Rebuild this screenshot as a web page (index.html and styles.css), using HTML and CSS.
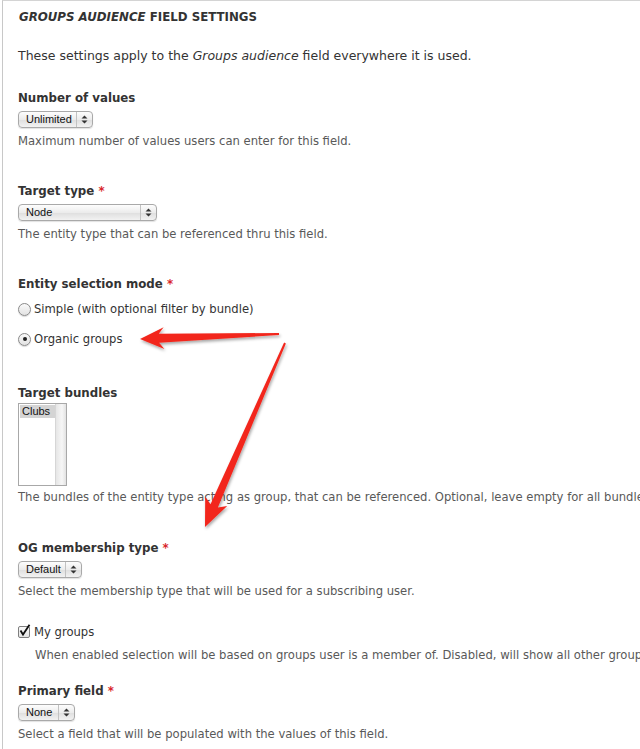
FILE: index.html
```html
<!DOCTYPE html>
<html lang="en">
<head>
  <meta charset="UTF-8" />
  <title>Groups audience field settings</title>
  <link rel="stylesheet" href="styles.css">
</head>
<body>

  <div class="panel">
    <h2 class="panel-title"><em>Groups audience</em> field settings</h2>
    <p class="intro">These settings apply to the <em>Groups audience</em> field everywhere it is used.</p>

    <div class="form-item item-first">
      <label>Number of values</label>
      <span class="select select-unlimited">
        <span class="select-text">Unlimited</span>
        <span class="select-arrows"><svg width="7" height="9" viewBox="0 0 7 9"><path d="M0.5 3.6L3.5 0.6L6.5 3.6Z M0.5 5.4L3.5 8.4L6.5 5.4Z"/></svg></span>
      </span>
      <div class="description">Maximum number of values users can enter for this field.</div>
    </div>

    <div class="form-item">
      <label>Target type <span class="required">*</span></label>
      <span class="select select-node">
        <span class="select-text">Node</span>
        <span class="select-arrows"><svg width="7" height="9" viewBox="0 0 7 9"><path d="M0.5 3.6L3.5 0.6L6.5 3.6Z M0.5 5.4L3.5 8.4L6.5 5.4Z"/></svg></span>
      </span>
      <div class="description">The entity type that can be referenced thru this field.</div>
    </div>

    <div class="form-item">
      <label>Entity selection mode <span class="required">*</span></label>
      <div class="radio radio-first"><span class="radio-dot"></span>Simple (with optional filter by bundle)</div>
      <div class="radio radio-second"><span class="radio-dot checked"></span>Organic groups</div>
    </div>

    <div class="form-item item-bundles">
      <label>Target bundles</label>
      <div class="listbox">
        <div class="listbox-options"><span class="option-selected">Clubs</span></div>
        <div class="listbox-scroll"></div>
      </div>
      <div class="description description-tight">The bundles of the entity type acting as group, that can be referenced. Optional, leave empty for all bundles.</div>
    </div>

    <div class="form-item item-og">
      <label>OG membership type <span class="required">*</span></label>
      <span class="select select-default">
        <span class="select-text">Default</span>
        <span class="select-arrows"><svg width="7" height="9" viewBox="0 0 7 9"><path d="M0.5 3.6L3.5 0.6L6.5 3.6Z M0.5 5.4L3.5 8.4L6.5 5.4Z"/></svg></span>
      </span>
      <div class="description">Select the membership type that will be used for a subscribing user.</div>
    </div>

    <div class="form-item item-check">
      <div class="checkbox">
        <span class="check-box"><svg width="14" height="14" viewBox="0 0 14 14"><path d="M2.5 6.5L5 10.5L11.5 0.8" fill="none" stroke="#111" stroke-width="1.8"/></svg></span>My groups
      </div>
      <div class="description description-indent">When enabled selection will be based on groups user is a member of. Disabled, will show all other groups.</div>
    </div>

    <div class="form-item item-primary">
      <label>Primary field <span class="required">*</span></label>
      <span class="select select-none">
        <span class="select-text">None</span>
        <span class="select-arrows"><svg width="7" height="9" viewBox="0 0 7 9"><path d="M0.5 3.6L3.5 0.6L6.5 3.6Z M0.5 5.4L3.5 8.4L6.5 5.4Z"/></svg></span>
      </span>
      <div class="description">Select a field that will be populated with the values of this field.</div>
    </div>
  </div>

  <!-- annotation arrows drawn over the form -->
  <svg class="arrows" width="640" height="749" viewBox="0 0 640 749">
    <defs>
      <filter id="shadow" x="-20%" y="-20%" width="140%" height="140%">
        <feDropShadow dx="1" dy="2" stdDeviation="1.5" flood-color="#000" flood-opacity="0.35"/>
      </filter>
    </defs>
    <g fill="#f2281d" filter="url(#shadow)">
      <polygon points="278.96,333 158.8,333.8 163.6,327.2 140,339 164.4,349.1 159.1,342.8 279.04,335"/>
      <polygon points="285.9,343.4 217.9,507.5 227.2,506.1 205,527 205.2,496.5 210.5,504.3 284.1,342.6"/>
    </g>
  </svg>

</body>
</html>
```

FILE: styles.css
```css
* {
  box-sizing: border-box;
}

body {
  margin: 0;
  padding: 0;
  background: #fff;
  font-family: "DejaVu Sans", Verdana, sans-serif;
  font-size: 12.5px;
  line-height: 18px;
  color: #333;
  overflow: hidden;
  position: relative;
  width: 640px;
  height: 749px;
}

.panel {
  margin-left: 2px;
  width: 720px;
  height: 760px;
  border-top: 1px solid #d4d4d4;
  border-left: 1px solid #c8c8c8;
  padding: 0 0 0 15px;
  white-space: nowrap;
}

.panel-title {
  margin: 7px 0 0 1px;
  font-size: 11.8px;
  line-height: 18px;
  font-weight: bold;
  text-transform: uppercase;
  color: #333;
}

.intro {
  margin: 21px 0 0;
}

.form-item {
  margin-top: 32px;
}

.form-item.item-first {
  margin-top: 24px;
}

.form-item.item-bundles {
  margin-top: 36px;
}

.form-item.item-og {
  margin-top: 33px;
}

.form-item.item-check {
  margin-top: 23px;
}

.form-item.item-primary {
  margin-top: 18px;
}

.form-item label {
  display: block;
  font-size: 11.8px;
  font-weight: bold;
  margin-bottom: 4px;
}

.required {
  color: #d9262b;
}

.description {
  margin-top: 4px;
  font-size: 11.6px;
  color: #595959;
}

.description-tight {
  margin-top: 2px;
}

.description-indent {
  margin-top: 5px;
  padding-left: 17px;
}

/* mac style popup select */
.select {
  display: flex;
  align-items: center;
  height: 17px;
  border: 1px solid #a9a9a9;
  border-radius: 4px;
  background: linear-gradient(#fdfdfd, #ececec 50%, #dedede 51%, #f2f2f2);
  box-shadow: 0 1px 1px rgba(0, 0, 0, 0.12);
  font-family: "Liberation Sans", Arial, sans-serif;
  font-size: 11px;
  color: #111;
}

.select-text {
  flex: 1;
  padding-left: 7px;
  line-height: 15px;
}

.select-arrows {
  width: 16px;
  height: 100%;
  border-left: 1px solid #c2c2c2;
  display: flex;
  align-items: center;
  justify-content: center;
}

.select-arrows svg {
  fill: #333;
}

.select-unlimited {
  width: 75px;
}

.select-node {
  width: 139px;
}

.select-default {
  width: 64px;
}

.select-none {
  width: 57px;
}

.radio,
.checkbox {
  display: flex;
  align-items: center;
  font-size: 11.6px;
}

.radio-first {
  margin-top: 7px;
}

.radio-second {
  margin-top: 12px;
}

.radio-dot {
  width: 13px;
  height: 13px;
  margin-right: 3px;
  border: 1px solid #8a8a8a;
  border-radius: 50%;
  background: linear-gradient(#fafafa, #e2e2e2);
  box-shadow: 0 1px 1px rgba(0, 0, 0, 0.15);
  display: flex;
  align-items: center;
  justify-content: center;
}

.radio-dot.checked::after {
  content: "";
  width: 4px;
  height: 4px;
  border-radius: 50%;
  background: #222;
}

.check-box {
  position: relative;
  width: 12px;
  height: 12px;
  margin-right: 4px;
  border: 1px solid #7e7e7e;
  border-radius: 2px;
  background: linear-gradient(#fafafa, #e4e4e4);
}

.check-box svg {
  position: absolute;
  left: -1px;
  top: -3px;
}

.listbox {
  display: flex;
  width: 49px;
  height: 83px;
  margin-top: -3px;
  border: 1px solid #a8a8a8;
  background: #fff;
}

.listbox-options {
  flex: 1;
  padding: 1px 0 0 1px;
  font-family: "Liberation Sans", Arial, sans-serif;
  font-size: 11px;
  line-height: 13px;
  color: #111;
}

.option-selected {
  display: block;
  padding-left: 2px;
  background: #d4d4d4;
}

.listbox-scroll {
  width: 11px;
  border-left: 1px solid #d6d6d6;
  background: linear-gradient(90deg, #e6e6e6, #f6f6f6 60%, #e2e2e2);
}

.arrows {
  position: absolute;
  top: 0;
  left: 0;
  pointer-events: none;
}
```
